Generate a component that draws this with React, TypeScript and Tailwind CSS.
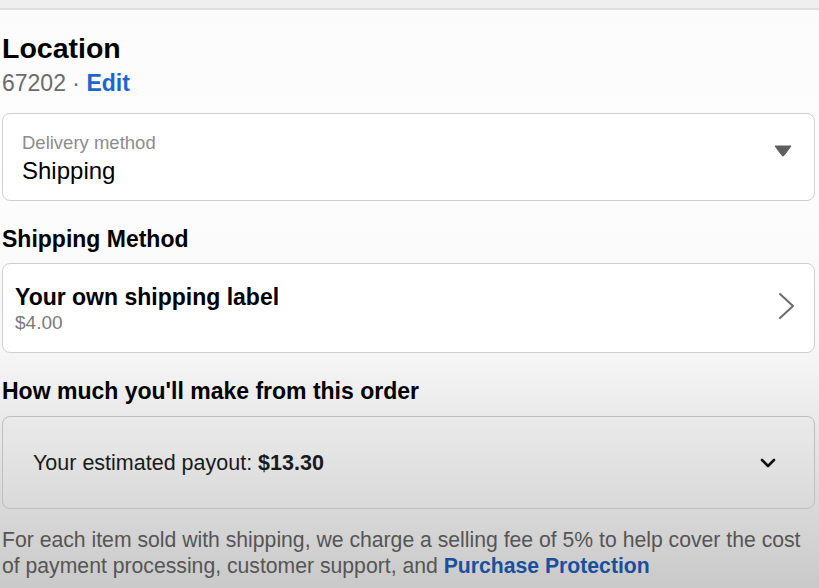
import React from "react";

export default function App() {
  return (
    <div
      className="w-[819px] h-[588px] overflow-hidden bg-[linear-gradient(to_bottom,#fbfbfb_0%,#fdfdfd_30%,#f8f8f8_58%,#f0f0f0_65%,#e5e5e5_75%,#dadada_85%,#cfcfcf_95%,#c9c9c9_100%)] text-black"
      style={{ fontFamily: '"Liberation Sans", Arial, sans-serif' }}
    >
      <div className="h-[10px] bg-[#efefef] border-b-2 border-[#dedede]" />
      <div className="pl-[2px] pr-[4px]">
        <h1 className="mt-[22px] text-[28.5px] leading-[32px] font-bold">Location</h1>
        <div className="mt-[5px] text-[23px] leading-[28px] text-[#6b6b6b]">
          67202 · <span className="text-[#1d64cf] font-semibold">Edit</span>
        </div>

        <div className="mt-[16px] h-[88px] rounded-[8px] border border-[#cfcfcf] bg-white flex items-center pl-[19px] pr-[22px]">
          <div className="flex-1">
            <div className="mt-[2px] text-[18.5px] leading-[22px] text-[#8c8c8c]">Delivery method</div>
            <div className="mt-[3px] text-[24px] leading-[28px]">Shipping</div>
          </div>
          <svg width="18" height="12" viewBox="0 0 18 12" className="-mt-[12px]">
            <path d="M1 1 H17 L10 10.5 Q9 11.5 8 10.5 Z" fill="#5e5e5e" stroke="#5e5e5e" strokeWidth="1" strokeLinejoin="round" />
          </svg>
        </div>

        <h2 className="mt-[24px] text-[23px] leading-[28px] font-bold">Shipping Method</h2>

        <div className="mt-[10px] h-[90px] rounded-[8px] border border-[#cfcfcf] bg-white flex items-center pl-[12px] pr-[18px]">
          <div className="flex-1">
            <div className="text-[23px] leading-[28px] font-bold">Your own shipping label</div>
            <div className="mt-[1px] text-[19px] leading-[22px] text-[#7a7a7a]">$4.00</div>
          </div>
          <svg width="18" height="28" viewBox="0 0 18 28" className="-mt-[4px]">
            <path d="M2 2 L15 14 L2 26" fill="none" stroke="#6a6a6a" strokeWidth="2" strokeLinecap="round" strokeLinejoin="round" />
          </svg>
        </div>

        <h2 className="mt-[24px] text-[23px] leading-[28px] font-bold">How much you'll make from this order</h2>

        <div className="mt-[11px] h-[93px] rounded-[8px] border border-[#bfbfbf] bg-white/[0.04] flex items-center pl-[30px] pr-[38px]">
          <div className="flex-1 text-[21.5px] leading-[26px] text-[#1a1a1a]">
            Your estimated payout: <span className="font-bold">$13.30</span>
          </div>
          <svg width="16" height="10" viewBox="0 0 16 10">
            <path d="M2 2 L8 8 L14 2" fill="none" stroke="#111" strokeWidth="2.6" strokeLinecap="round" strokeLinejoin="round" />
          </svg>
        </div>

        <p className="mt-[18px] text-[21.2px] leading-[26px] text-[#555]">
          For each item sold with shipping, we charge a selling fee of 5% to help cover the cost of payment processing, customer support, and{" "}
          <span className="text-[#1b4f9c] font-semibold">Purchase Protection</span>
        </p>
      </div>
    </div>
  );
}
